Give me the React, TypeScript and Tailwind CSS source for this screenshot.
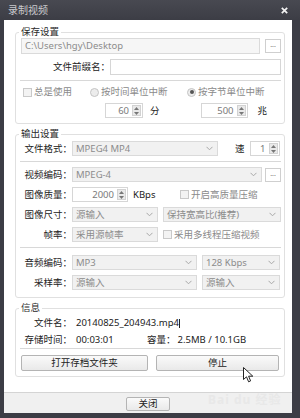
import type { ReactNode } from "react";

function Chevron() {
  return (
    <svg width="7" height="5" viewBox="0 0 7 5" className="shrink-0">
      <path d="M0.5 0.8 L3.5 3.8 L6.5 0.8" fill="none" stroke="#a8a8a8" strokeWidth="1" />
    </svg>
  );
}

function Select({ text, className = "" }: { text: string; className?: string }) {
  return (
    <div
      className={`h-[15px] flex items-center justify-between border border-[#dadada] bg-[#f1f1f1] pl-[3px] pr-[4px] text-[#8c8c8c] ${className}`}
    >
      <span className="whitespace-nowrap leading-[12px]">{text}</span>
      <Chevron />
    </div>
  );
}

function Spin({ value, className = "" }: { value: string; className?: string }) {
  return (
    <div className={`h-[15px] flex border border-[#d6d6d6] bg-white ${className}`}>
      <span className="flex-1 flex items-center justify-end pr-[3px] text-[#7a7a7a]">{value}</span>
      <div className="w-[9px] my-[1px] mr-[1px] flex flex-col items-center justify-center gap-[2px] bg-[#e9e9e9] border border-[#d2d2d2]">
        <svg width="5" height="3" viewBox="0 0 5 3">
          <path d="M0 3 L2.5 0 L5 3 Z" fill="#777" />
        </svg>
        <svg width="5" height="3" viewBox="0 0 5 3">
          <path d="M0 0 L2.5 3 L5 0 Z" fill="#777" />
        </svg>
      </div>
    </div>
  );
}

function Check({ label }: { label: string }) {
  return (
    <span className="flex items-center gap-[2px] text-[#8a8a8a] whitespace-nowrap">
      <span className="w-[9px] h-[9px] border border-[#c9c9c9] bg-[#f3f3f3]" />
      {label}
    </span>
  );
}

function Radio({ label, checked = false }: { label: string; checked?: boolean }) {
  return (
    <span className="flex items-center gap-[2px] text-[#8a8a8a] whitespace-nowrap">
      <span className="w-[9px] h-[9px] rounded-full border border-[#c4c4c4] bg-[#ececec] flex items-center justify-center">
        {checked && <span className="w-[4px] h-[4px] rounded-full bg-[#555]" />}
      </span>
      {label}
    </span>
  );
}

function Dots({ className = "" }: { className?: string }) {
  return (
    <div
      className={`w-[16px] h-[14px] flex items-end justify-center pb-[4px] border border-[#cfcfcf] bg-white text-[#777] text-[7px] leading-none ${className}`}
    >
      ...
    </div>
  );
}

function Group({ title, className = "", children }: { title: string; className?: string; children: ReactNode }) {
  return (
    <fieldset className={`border border-[#e0e0e0] rounded-[3px] pl-[5px] pr-[3px] ${className}`}>
      <legend className="-ml-[2px] px-[2px] leading-[12px] text-[#2a2a2a]">{title}</legend>
      {children}
    </fieldset>
  );
}

function Label({ children, className = "w-[51px]" }: { children: ReactNode; className?: string }) {
  return <span className={`shrink-0 text-right text-[#222] whitespace-nowrap ${className}`}>{children}</span>;
}

function Sep({ className = "" }: { className?: string }) {
  return <div className={`h-px bg-[#d8d8d8] -ml-[1px] ${className}`} />;
}

function Btn({ text, className = "" }: { text: string; className?: string }) {
  return (
    <button
      type="button"
      className={`flex items-center justify-center border border-[#b4b4b4] rounded-[2px] bg-gradient-to-b from-[#fafafa] to-[#e9e9e9] text-[#222] ${className}`}
    >
      {text}
    </button>
  );
}

export default function App() {
  return (
    <div className="relative w-[300px] h-[418px] overflow-hidden flex flex-col bg-[#3c3d45] font-['Noto_Sans','Noto_Sans_CJK_SC',sans-serif] text-[9.5px] leading-none select-none">
      {/* title bar */}
      <div className="h-[20px] shrink-0 flex items-center justify-between pl-[8px] pr-[12px] bg-gradient-to-b from-[#484951] to-[#3c3d45]">
        <span className="text-[#c9c9cc] text-[10px]">录制视频</span>
        <svg width="7" height="7" viewBox="0 0 7 7">
          <path d="M0.8 0.8 L6.2 6.2 M6.2 0.8 L0.8 6.2" stroke="#f2f2f2" strokeWidth="1.7" />
        </svg>
      </div>

      <div className="flex-1 flex flex-col ml-[4px] mr-[8px] mb-[5px] bg-white">
        <div className="h-[372px] shrink-0 pl-[11px] pr-[7px] pt-[6px] flex flex-col">
          {/* 保存设置 */}
          <Group title="保存设置" className="pb-[5px]">
            <div className="flex items-center gap-[5px] h-[16px]">
              <div className="flex-1 h-[16px] flex items-center pl-[3px] border border-[#dadada] bg-[#f6f6f6] text-[#8c8c8c]">
                C:\Users\hgy\Desktop
              </div>
              <Dots />
            </div>
            <div className="flex items-center h-[16px] mt-[5px]">
              <Label className="w-[89px]">文件前缀名：</Label>
              <div className="flex-1 h-[16px] border border-[#d6d6d6] bg-white" />
            </div>
            <Sep className="mt-[5px]" />
            <div className="flex items-center h-[14px] mt-[4px] pl-[2px]">
              <div className="w-[67px]">
                <Check label="总是使用" />
              </div>
              <div className="w-[97px]">
                <Radio label="按时间单位中断" />
              </div>
              <Radio label="按字节单位中断" checked />
            </div>
            <div className="flex items-center h-[15px] mt-[4px]">
              <Spin value="60" className="ml-[84px] w-[38px]" />
              <span className="ml-[7px] text-[#222]">分</span>
              <Spin value="500" className="ml-[41px] w-[47px]" />
              <span className="ml-[10px] text-[#222]">兆</span>
            </div>
          </Group>

          {/* 输出设置 */}
          <Group title="输出设置" className="mt-[4px] pb-[7px]">
            <div className="flex items-center h-[15px] mt-[1px]">
              <Label>文件格式：</Label>
              <Select text="MPEG4 MP4" className="w-[146px]" />
              <span className="ml-[17px] text-[#222]">速</span>
              <Spin value="1" className="ml-[5px] w-[30px]" />
            </div>
            <Sep className="mt-[5px]" />
            <div className="flex items-center h-[15px] mt-[5px]">
              <Label>视频编码：</Label>
              <Select text="MPEG-4" className="flex-1" />
              <Dots className="ml-[3px]" />
            </div>
            <div className="flex items-center h-[15px] mt-[5px]">
              <Label>图像质量：</Label>
              <div className="w-[108px] flex items-center">
                <Spin value="2000" className="w-[56px]" />
                <span className="ml-[5px] text-[#222]">KBps</span>
              </div>
              <Check label="开启高质量压缩" />
            </div>
            <div className="flex items-center h-[15px] mt-[5px]">
              <Label>图像尺寸：</Label>
              <Select text="源输入" className="w-[86px]" />
              <Select text="保持宽高比(推荐)" className="ml-[5px] flex-1" />
            </div>
            <div className="flex items-center h-[15px] mt-[5px]">
              <Label>帧率：</Label>
              <Select text="采用源帧率" className="w-[86px]" />
              <span className="ml-[5px]">
                <Check label="采用多线程压缩视频" />
              </span>
            </div>
            <Sep className="mt-[5px]" />
            <div className="flex items-center h-[15px] mt-[7px]">
              <Label>音频编码：</Label>
              <Select text="MP3" className="w-[125px]" />
              <Select text="128 Kbps" className="ml-[5px] w-[78px]" />
            </div>
            <div className="flex items-center h-[15px] mt-[5px]">
              <Label>采样率：</Label>
              <Select text="源输入" className="w-[125px]" />
              <Select text="源输入" className="ml-[5px] w-[78px]" />
            </div>
          </Group>

          {/* 信息 */}
          <Group title="信息" className="mt-[4px] pb-[5px]">
            <div className="flex items-center h-[14px] mt-[2px]">
              <Label>文件名：</Label>
              <span className="ml-[4px] text-[#222]">
                20140825_204943.mp4
                <span className="inline-block w-px h-[9px] bg-[#222] align-middle" />
              </span>
            </div>
            <div className="flex items-center h-[14px] mt-[3px]">
              <Label>存储时间：</Label>
              <span className="ml-[4px] w-[71px] text-[#222]">00:03:01</span>
              <span className="text-[#222]">容量：</span>
              <span className="ml-[2px] text-[#222]">2.5MB / 10.1GB</span>
            </div>
            <Sep className="mt-[1px]" />
            <div className="flex items-center gap-[8px] mt-[6px] h-[16px]">
              <Btn text="打开存档文件夹" className="w-[127px] h-[16px]" />
              <Btn text="停止" className="w-[123px] h-[16px]" />
            </div>
          </Group>
        </div>

        {/* footer */}
        <div className="flex-1 flex justify-center pt-[4px] border-t border-[#d4d4d4] bg-[#f0f0f0]">
          <Btn text="关闭" className="w-[44px] h-[14px] bg-white" />
        </div>
      </div>

      {/* watermark */}
      <span className="absolute left-[208px] top-[394px] text-[12px] font-bold tracking-[1px] text-[#e8e8e8] pointer-events-none whitespace-nowrap">
        Bai du 经验
      </span>

      {/* mouse cursor */}
      <svg
        width="11"
        height="16"
        viewBox="0 0 11 16"
        className="absolute left-[243px] top-[367px] pointer-events-none"
      >
        <path d="M0.5 0.5 L0.5 12.5 L3.5 9.8 L5.6 14.8 L7.6 13.9 L5.6 9.2 L9.8 9.2 Z" fill="#fff" stroke="#222" strokeWidth="1" strokeLinejoin="round" />
      </svg>
    </div>
  );
}
